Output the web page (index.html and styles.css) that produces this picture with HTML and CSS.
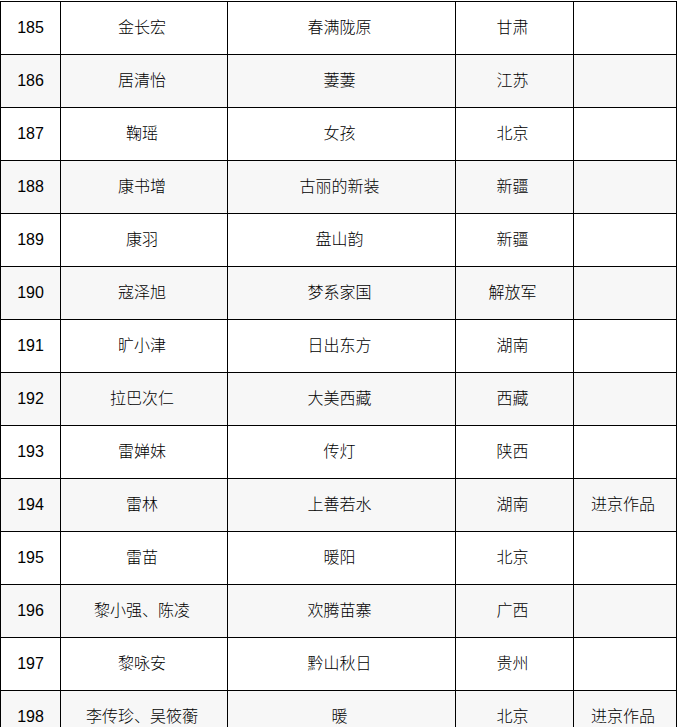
FILE: index.html
```html
<!DOCTYPE html>
<html lang="zh">
<head>
<meta charset="utf-8">
<title>名单</title>
<link rel="stylesheet" href="styles.css">
</head>
<body>
<table class="list">
  <colgroup>
    <col class="c-num"><col class="c-name"><col class="c-work"><col class="c-region"><col class="c-note">
  </colgroup>
  <tbody>
    <tr><td class="num">185</td><td>金长宏</td><td>春满陇原</td><td>甘肃</td><td></td></tr>
    <tr class="alt"><td class="num">186</td><td>居清怡</td><td>萋萋</td><td>江苏</td><td></td></tr>
    <tr><td class="num">187</td><td>鞠瑶</td><td>女孩</td><td>北京</td><td></td></tr>
    <tr class="alt"><td class="num">188</td><td>康书增</td><td>古丽的新装</td><td>新疆</td><td></td></tr>
    <tr><td class="num">189</td><td>康羽</td><td>盘山韵</td><td>新疆</td><td></td></tr>
    <tr class="alt"><td class="num">190</td><td>寇泽旭</td><td>梦系家国</td><td>解放军</td><td></td></tr>
    <tr><td class="num">191</td><td>旷小津</td><td>日出东方</td><td>湖南</td><td></td></tr>
    <tr class="alt"><td class="num">192</td><td>拉巴次仁</td><td>大美西藏</td><td>西藏</td><td></td></tr>
    <tr><td class="num">193</td><td>雷婵妹</td><td>传灯</td><td>陕西</td><td></td></tr>
    <tr class="alt"><td class="num">194</td><td>雷林</td><td>上善若水</td><td>湖南</td><td>进京作品</td></tr>
    <tr><td class="num">195</td><td>雷苗</td><td>暖阳</td><td>北京</td><td></td></tr>
    <tr class="alt"><td class="num">196</td><td>黎小强、陈凌</td><td>欢腾苗寨</td><td>广西</td><td></td></tr>
    <tr><td class="num">197</td><td>黎咏安</td><td>黔山秋日</td><td>贵州</td><td></td></tr>
    <tr class="alt"><td class="num">198</td><td>李传珍、吴筱蘅</td><td>暖</td><td>北京</td><td>进京作品</td></tr>
  </tbody>
</table>
</body>
</html>
```
FILE: styles.css
```css
html, body {
  margin: 0;
  padding: 0;
  background: #fff;
}
body {
  padding-top: 1px;
  font-family: "Liberation Sans", "Noto Sans CJK SC", sans-serif;
  font-size: 16px;
  color: #000;
}
.list {
  border-collapse: separate;
  border-spacing: 0;
  table-layout: fixed;
  width: 677px;
  border-left: 1px solid #000;
  border-top: 1px solid #000;
}
.c-num { width: 60px; }
.c-name { width: 167px; }
.c-work { width: 228px; }
.c-region { width: 118px; }
.c-note { width: 103px; }
.list td {
  box-sizing: border-box;
  height: 53px;
  padding: 0 4px 0 0;
  border-right: 1px solid #000;
  border-bottom: 1px solid #000;
  text-align: center;
  vertical-align: middle;
  line-height: 20px;
  white-space: nowrap;
  font-weight: 300;
}
.list td.num {
  padding: 0;
  font-weight: 400;
}
.list tr.alt td {
  background: #f7f7f7;
}
```
